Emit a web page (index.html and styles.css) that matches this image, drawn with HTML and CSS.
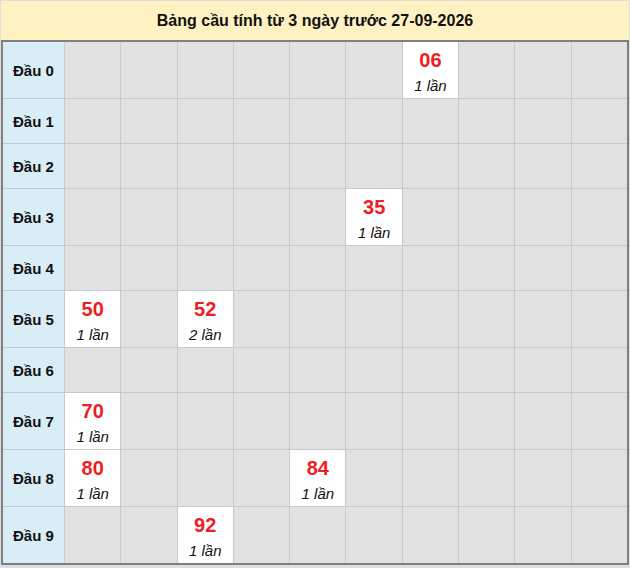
FILE: index.html
```html
<!DOCTYPE html>
<html lang="vi">
<head>
<meta charset="utf-8">
<title>Bảng cầu</title>
<link rel="stylesheet" href="styles.css">
</head>
<body>
<div class="wrap">
  <div class="title">Bảng cầu tính từ 3 ngày trước 27-09-2026</div>
  <div class="board">
    <div class="lbl">Đầu 0</div><div></div><div></div><div></div><div></div><div></div><div></div><div class="hit"><b>06</b><i>1 lần</i></div><div></div><div></div><div></div>
    <div class="lbl">Đầu 1</div><div></div><div></div><div></div><div></div><div></div><div></div><div></div><div></div><div></div><div></div>
    <div class="lbl">Đầu 2</div><div></div><div></div><div></div><div></div><div></div><div></div><div></div><div></div><div></div><div></div>
    <div class="lbl">Đầu 3</div><div></div><div></div><div></div><div></div><div></div><div class="hit"><b>35</b><i>1 lần</i></div><div></div><div></div><div></div><div></div>
    <div class="lbl">Đầu 4</div><div></div><div></div><div></div><div></div><div></div><div></div><div></div><div></div><div></div><div></div>
    <div class="lbl">Đầu 5</div><div class="hit"><b>50</b><i>1 lần</i></div><div></div><div class="hit"><b>52</b><i>2 lần</i></div><div></div><div></div><div></div><div></div><div></div><div></div><div></div>
    <div class="lbl">Đầu 6</div><div></div><div></div><div></div><div></div><div></div><div></div><div></div><div></div><div></div><div></div>
    <div class="lbl">Đầu 7</div><div class="hit"><b>70</b><i>1 lần</i></div><div></div><div></div><div></div><div></div><div></div><div></div><div></div><div></div><div></div>
    <div class="lbl">Đầu 8</div><div class="hit"><b>80</b><i>1 lần</i></div><div></div><div></div><div></div><div class="hit"><b>84</b><i>1 lần</i></div><div></div><div></div><div></div><div></div><div></div>
    <div class="lbl">Đầu 9</div><div></div><div></div><div class="hit"><b>92</b><i>1 lần</i></div><div></div><div></div><div></div><div></div><div></div><div></div><div></div>
  </div>
</div>
</body>
</html>
```
FILE: styles.css
```css
html, body {
  margin: 0;
  padding: 0;
  background: #dedede;
  font-family: "Liberation Sans", Arial, sans-serif;
}
.wrap {
  width: 628px;
  margin: 1px 1px 0 1px;
}
.title {
  height: 39px;
  background: #fff2c2;
  display: flex;
  align-items: center;
  justify-content: center;
  font-weight: bold;
  font-size: 16px;
  color: #111;
}
.board {
  border: 2px solid #808080;
  background: #c9c9c9;
  display: grid;
  grid-template-columns: 61px repeat(10, 1fr);
  grid-template-rows: 56px 44px 44px 56px 44px 56px 44px 56px 56px 56px;
  gap: 1px;
}
.board > div {
  background: #e1e2e4;
}
.board > .lbl {
  background: #d9edf7;
  font-weight: bold;
  font-size: 15px;
  color: #111;
  display: flex;
  align-items: center;
  padding-left: 10px;
}
.board > .hit {
  background: #fff;
  display: flex;
  flex-direction: column;
  align-items: center;
  padding-top: 7px;
  box-sizing: border-box;
}
.hit b {
  color: #ee1c25;
  font-size: 20px;
  line-height: 22px;
}
.hit i {
  font-size: 15px;
  line-height: 18px;
  margin-top: 6px;
  color: #111;
}
```
